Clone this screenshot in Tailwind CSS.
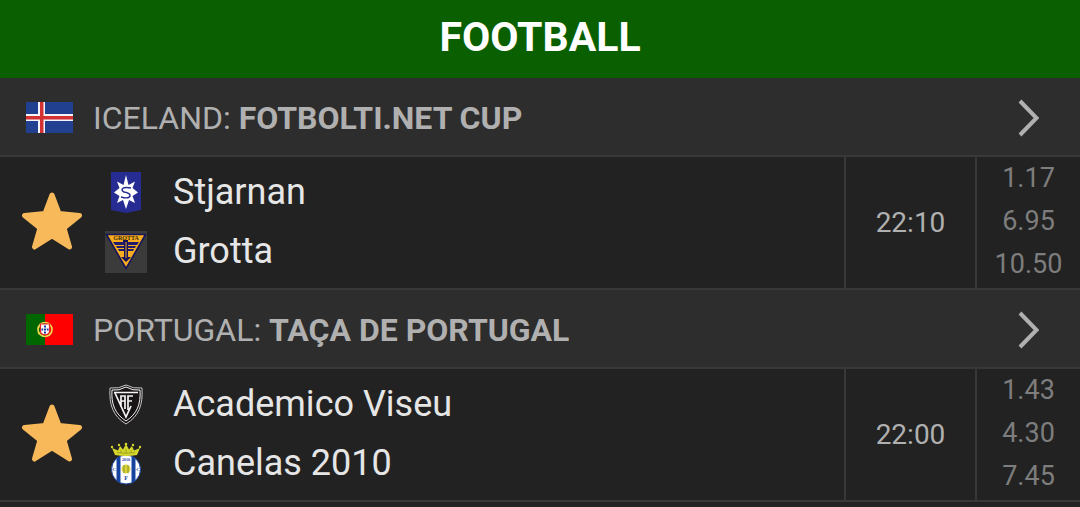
<!DOCTYPE html>
<html lang="en">
<head>
<meta charset="utf-8">
<meta name="viewport" content="width=device-width, initial-scale=1">
<title>Football</title>
<script src="https://cdn.jsdelivr.net/npm/@tailwindcss/browser@4"></script>
</head>
<body class="min-h-screen bg-[#222222] font-['Roboto','Liberation_Sans',sans-serif] text-[#e6e6e6]">
<svg class="hidden" aria-hidden="true">
  <symbol id="star" viewBox="0 0 60 58"><path d="M30 3 37 21.500 57.500 23.500 42 36 47.500 55 30 44 12.500 55 18 36 2.500 23.500 23 21.500Z" fill="#f8b95b" stroke="#f8b95b" stroke-width="5" stroke-linejoin="round"/></symbol>
  <symbol id="chevron" viewBox="0 0 22 38"><path d="M2 2 18.500 19 2 36" fill="none" stroke="currentColor" stroke-width="4"/></symbol>
</svg>

<header class="flex h-[78px] items-center justify-center bg-[#0a6000] pb-1">
  <h1 class="text-[41px] leading-none font-bold text-white">FOOTBALL</h1>
</header>

<main>
  <section>
    <a href="#iceland" class="flex h-[79px] items-center border-b-2 border-[#383838] bg-[#2d2d2d] pt-0.5 pr-10 pl-[26px] text-[32px] text-[#b0b0b0]">
      <svg class="h-[31px] w-[47px] shrink-0" viewBox="0 0 47 31" role="img" aria-label="Iceland">
        <path d="M0 0H47V31H0Z" fill="#21408f"/>
        <path d="M12 0H19V31H12ZM0 12H47V19H0Z" fill="#f3f3fa"/>
        <path d="M14 0H17.500V31H14ZM0 14H47V17.500H0Z" fill="#d43232"/>
      </svg>
      <h2 class="ml-5 flex-1">ICELAND: <b>FOTBOLTI.NET CUP</b></h2>
      <svg class="h-[38px] w-[22px]" aria-hidden="true"><use href="#chevron"/></svg>
    </a>
    <div class="flex h-[133px] border-b-2 border-[#383838]">
      <button type="button" aria-label="Remove from favourites" class="flex w-[104px] shrink-0 items-center pb-1 pl-[22px]">
        <svg class="h-[58px] w-[60px]"><use href="#star"/></svg>
      </button>
      <ul class="flex flex-1 flex-col justify-center pb-0.5 text-[36px] leading-none">
        <li class="flex h-[59px] items-center gap-[26px]">
          <svg class="h-[43px] w-[43px]" viewBox="0 0 43 43" aria-hidden="true">
            <path d="M7 1H37V39L22 42 7 39Z" fill="#262c91"/>
            <path d="M22 4 24.500 14 31 10.500 28.500 17 34 21.500 28.500 25 31 32 25 29 22 38 19 29 13 32 15.500 25 10 21.500 15.500 17 13 10.500 19.500 14Z" fill="#fff"/>
            <path d="M27 17C18 15 16 19 20 21 29 22 28 29 17 26" fill="none" stroke="#262c91" stroke-width="1.500"/>
          </svg>
          <span>Stjarnan</span>
        </li>
        <li class="flex h-[59px] items-center gap-[26px]">
          <svg class="h-[43px] w-[43px]" viewBox="0 0 43 43" aria-hidden="true">
            <path d="M1 1H43V43H1Z" fill="#3b3b3b"/>
            <path d="M2.500 4.500H41.500L22 38.500Z" fill="#f8ae1e" stroke="#16145b" stroke-width="1.600"/>
            <text x="22" y="10" text-anchor="middle" font-family="Liberation Serif, serif" font-size="6" font-weight="bold" fill="#3a2808">GROTTA</text>
            <path d="M9 12H35L33 15H11ZM12 16H32L31 18H13ZM14 19H30L29 21H15Z" fill="#201d70"/>
            <path d="M19 10H24V27H27L22 32 17 27H20V12H19Z" fill="#16145b"/>
            <path d="M22 12V28" stroke="#e4a234" stroke-width="1"/>
          </svg>
          <span>Grotta</span>
        </li>
      </ul>
      <time datetime="22:10" class="flex w-[131px] items-center justify-center border-l-2 border-[#383838] text-[28px] text-[#b0b0b0]">22:10</time>
      <ul class="flex w-[105px] flex-col items-center justify-center border-l-2 border-[#383838] pb-0.5 text-[27px] leading-[43px] text-[#7d7d7d]">
        <li>1.17</li><li>6.95</li><li>10.50</li>
      </ul>
    </div>
  </section>

  <section>
    <a href="#portugal" class="flex h-[79px] items-center border-b-2 border-[#383838] bg-[#2d2d2d] pt-0.5 pr-10 pl-[26px] text-[32px] text-[#b0b0b0]">
      <svg class="h-[31px] w-[47px] shrink-0" viewBox="0 0 47 31" role="img" aria-label="Portugal">
        <path d="M0 0H47V31H0Z" fill="#fe0000"/>
        <path d="M0 0H19V31H0Z" fill="#006600"/>
        <circle cx="19" cy="15.500" r="7" fill="none" stroke="#e9d84c" stroke-width="1.700"/>
        <path d="M12 12 25 20M12 20 25 11M14 9 24 22" stroke="#e9d84c" stroke-width="1"/>
        <path d="M14.500 10H23.500V17C23.500 22 14.500 22 14.500 17Z" fill="#fff" stroke="#e62222" stroke-width="1.200"/>
        <path d="M18 11.500H20V13.500H18ZM18 14.500H20V16.500H18ZM18 17.500H20V19.500H18ZM15.500 14.500H17.200V16.500H15.500ZM20.800 14.500H22.500V16.500H20.800Z" fill="#173a98"/>
      </svg>
      <h2 class="ml-5 flex-1">PORTUGAL: <b>TAÇA DE PORTUGAL</b></h2>
      <svg class="h-[38px] w-[22px]" aria-hidden="true"><use href="#chevron"/></svg>
    </a>
    <div class="flex h-[133px] border-b-2 border-[#383838]">
      <button type="button" aria-label="Remove from favourites" class="flex w-[104px] shrink-0 items-center pb-1 pl-[22px]">
        <svg class="h-[58px] w-[60px]"><use href="#star"/></svg>
      </button>
      <ul class="flex flex-1 flex-col justify-center pb-0.5 text-[36px] leading-none">
        <li class="flex h-[59px] items-center gap-[26px]">
          <svg class="h-[43px] w-[43px]" viewBox="0 0 43 43" aria-hidden="true">
            <path d="M22 2Q29 6 38 5C39 22 35 33 22 41 9 33 5 22 6 5Q15 6 22 2Z" fill="#191516" stroke="#c8c8c8" stroke-width="1"/>
            <path d="M22 4Q29 8 36 7C37 21 33 31 22 38 11 31 7 21 8 7Q15 8 22 4Z" fill="none" stroke="#f2f2f2" stroke-width="1"/>
            <path d="M10 9.500H34M11 10 22 34 27 23M17 24V13H21V26M17 18H21M24 27V13H29M24 18H28" fill="none" stroke="#f4f4f4" stroke-width="1.700"/>
          </svg>
          <span>Academico Viseu</span>
        </li>
        <li class="flex h-[59px] items-center gap-[26px]">
          <svg class="h-[43px] w-[43px]" viewBox="0 0 43 43" aria-hidden="true">
            <clipPath id="ball"><circle cx="22" cy="27.500" r="14.500"/></clipPath>
            <g clip-path="url(#ball)">
              <path d="M7 12H37V43H7Z" fill="#fff"/>
              <path d="M12.500 12H16.500V43H12.500ZM27.500 12H31.500V43H27.500Z" fill="#1642a0"/>
            </g>
            <circle cx="22" cy="27.500" r="14.500" fill="none" stroke="#1642a0" stroke-width="1"/>
            <circle cx="22" cy="27" r="4.500" fill="#d8d437"/>
            <path d="M20 23V31M24 23V31" stroke="#6c7434" stroke-width=".7"/>
            <g fill="#1642a0" font-family="Liberation Serif, serif" font-weight="bold" text-anchor="middle">
              <text x="22" y="19" font-size="4">2010</text>
              <text x="10" y="29" font-size="5">C</text>
              <text x="34" y="29" font-size="5">C</text>
              <text x="22" y="38" font-size="6">F</text>
            </g>
            <path d="M11 13 8 6 14 8.500 16 4 19 7.500 22 2 25 7.500 28 4 30 8.500 36 6 33 13Q22 15 11 13Z" fill="#d5d62b"/>
            <path d="M13 10.500Q22 12 31 10.500M17 8V11M22 7V11M27 8V11" fill="none" stroke="#8b9018" stroke-width=".7"/>
            <g fill="#d5d62b"><circle cx="8" cy="5" r="1.200"/><circle cx="15" cy="3" r="1.200"/><circle cx="22" cy="2" r="1.300"/><circle cx="29" cy="3" r="1.200"/><circle cx="36" cy="5" r="1.200"/></g>
          </svg>
          <span>Canelas 2010</span>
        </li>
      </ul>
      <time datetime="22:00" class="flex w-[131px] items-center justify-center border-l-2 border-[#383838] text-[28px] text-[#b0b0b0]">22:00</time>
      <ul class="flex w-[105px] flex-col items-center justify-center border-l-2 border-[#383838] pb-0.5 text-[27px] leading-[43px] text-[#7d7d7d]">
        <li>1.43</li><li>4.30</li><li>7.45</li>
      </ul>
    </div>
  </section>
</main>
</body>
</html>
